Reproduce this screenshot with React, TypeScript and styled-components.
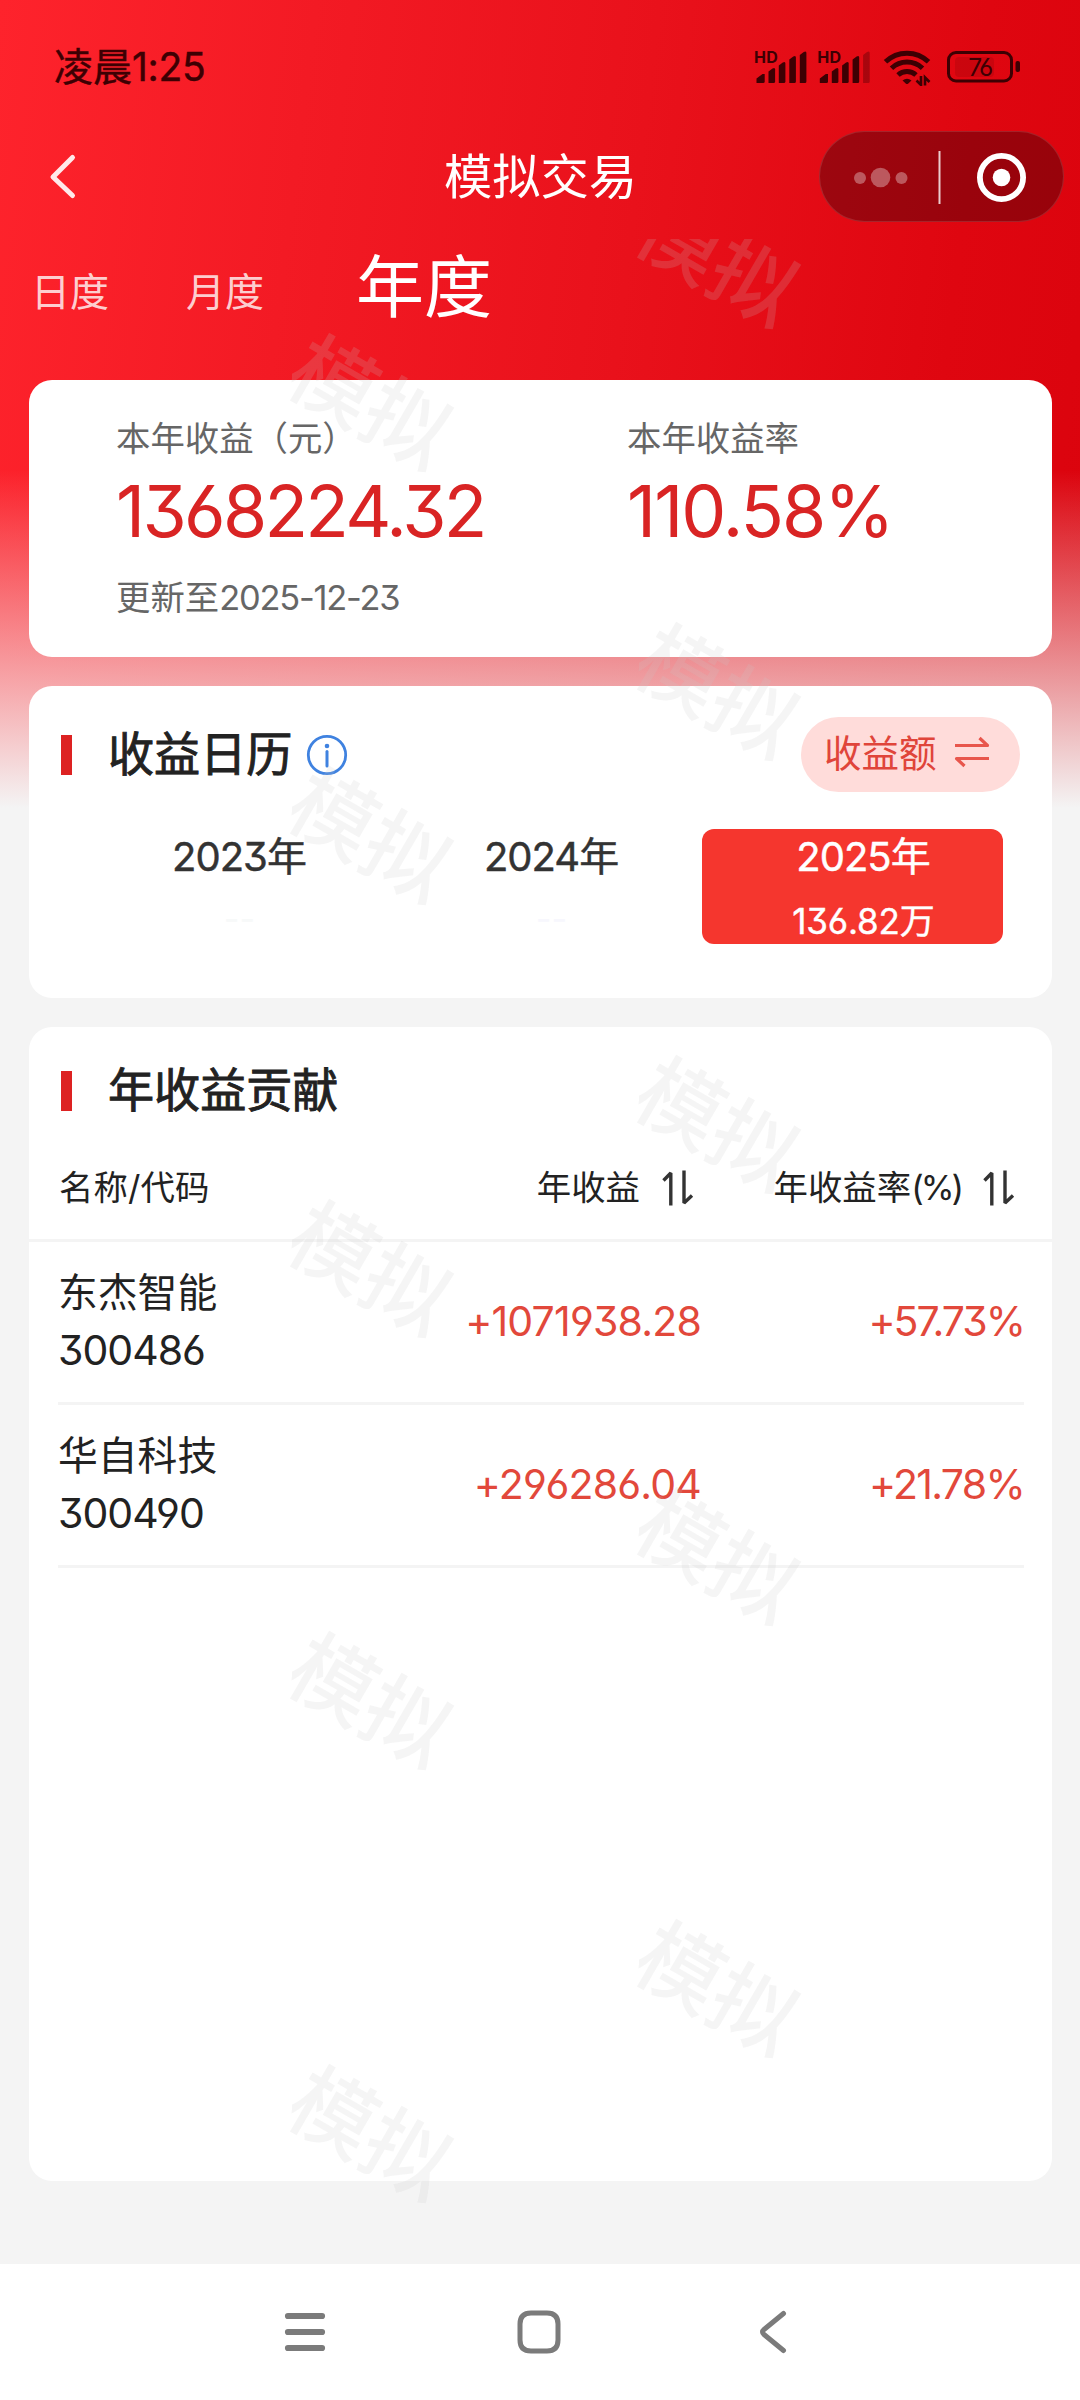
import React from "react";
import styled, { createGlobalStyle } from "styled-components";

const GlobalStyle = createGlobalStyle`
  * { box-sizing: border-box; }
  html, body { margin: 0; padding: 0; }
  body {
    background: #f4f4f4;
    font-family: Inter, "Noto Sans CJK SC", sans-serif;
    font-feature-settings: "cv03", "cv04", "cv09";
    -webkit-font-smoothing: antialiased;
  }
`;

const Screen = styled.div`
  position: relative;
  width: 1080px;
  height: 2400px;
  overflow: hidden;
  display: flex;
  flex-direction: column;
  background:
    linear-gradient(to bottom, rgba(244, 244, 244, 0) 470px, #f4f4f4 808px),
    linear-gradient(97deg, #fe232c 0%, #f31a24 23%, #e9111b 48%, #df0610 72%, #d6000a 100%);
`;

const Text = styled.span<{
  $size: number;
  $color?: string;
  $weight?: number;
  $track?: number;
  $line?: number;
  $stroke?: number;
}>`
  display: block;
  white-space: nowrap;
  font-size: ${(p) => p.$size}px;
  color: ${(p) => p.$color ?? "#222222"};
  font-weight: ${(p) => p.$weight ?? 400};
  letter-spacing: ${(p) => p.$track ?? 0}px;
  line-height: ${(p) => p.$line ?? 50}px;
  -webkit-text-stroke: ${(p) => p.$stroke ?? 0}px currentColor;
`;

const Inline = styled.span<{ $track: number }>`
  letter-spacing: ${(p) => p.$track}px;
`;

const StatusBar = styled.header`
  flex: none;
  height: 131px;
  padding: 42px 60px 39px 54px;
  display: flex;
  justify-content: space-between;
`;

const StatusIcons = styled.svg`
  flex: none;
  width: 270px;
  height: 40px;
  margin-top: 4px;
`;

const TitleBar = styled.div`
  flex: none;
  height: 91px;
  padding: 0 16px 0 47px;
  display: grid;
  grid-template-columns: 246px 1fr 245px;
  align-items: center;
`;

const BackIcon = styled.svg`
  width: 32px;
  height: 50px;
  margin-bottom: 2px;
`;

const Title = styled.h1`
  margin: 0 0 0 -31px;
  text-align: center;
  font-weight: 400;
  font-size: 48.3px;
  line-height: 60px;
  color: #fff;
`;

const Capsule = styled.div`
  width: 245px;
  height: 91px;
  border-radius: 46px;
  background: rgba(20, 0, 5, 0.34);
  border: 1px solid rgba(255, 255, 255, 0.12);
  display: flex;
  align-items: center;
`;

const Tabs = styled.nav`
  flex: none;
  height: 158px;
  padding: 33px 0 0 31px;
  display: flex;
  align-items: flex-start;
`;

const Tab = styled.div<{ $active?: boolean }>`
  width: ${(p) => (p.$active ? 140 : 80)}px;
  margin-right: ${(p) => (p.$active ? 0 : 75)}px;
  padding-top: ${(p) => (p.$active ? 0 : 5)}px;
  &:nth-child(2) { margin-right: 90px; }
  white-space: nowrap;
  font-size: ${(p) => (p.$active ? 68 : 39)}px;
  line-height: 64px;
  color: ${(p) => (p.$active ? "#fff" : "rgba(255,255,255,0.8)")};
`;

const Cards = styled.main`
  flex: none;
  height: 1884px;
  padding: 0 28px 83px 29px;
  display: flex;
  flex-direction: column;
  gap: 29px;
`;

const Card = styled.section<{ $height?: number }>`
  flex: ${(p) => (p.$height ? "none" : "1")};
  height: ${(p) => (p.$height ? `${p.$height}px` : "auto")};
  border-radius: 23px;
  background: #fff;
  overflow: hidden;
`;

const Summary = styled.div`
  display: grid;
  grid-template-columns: 511px 1fr;
  padding: 34px 0 0 87px;
`;

const CardHead = styled.div<{ $top: number }>`
  height: 74px;
  margin-top: ${(p) => p.$top}px;
  padding: 0 32px;
  display: flex;
  align-items: center;
`;

const Marker = styled.i`
  width: 11px;
  height: 40px;
  margin-right: 36px;
  background: #dd2222;
`;

const Heading = styled.h2`
  margin: 0 0 2px;
  font-size: 46.1px;
  line-height: 60px;
  font-weight: 400;
  color: #222;
  -webkit-text-stroke: 0.9px currentColor;
`;

const InfoIcon = styled.svg`
  width: 42px;
  height: 42px;
  margin-left: 14px;
`;

const Pill = styled.button`
  margin: 0 0 1px auto;
  width: 219px;
  height: 75px;
  padding: 0 0 2px 23px;
  border: 0;
  border-radius: 38px;
  background: #ffdcda;
  font-family: inherit;
  display: flex;
  align-items: center;
`;

const SwapIcon = styled.svg`
  width: 38px;
  height: 38px;
  margin: 0 0 5px 16px;
`;

const Years = styled.div`
  display: grid;
  grid-template-columns: repeat(3, 301px);
  column-gap: 11px;
  padding: 37px 0 0 49px;
`;

const Year = styled.div<{ $active?: boolean }>`
  height: 115px;
  padding: 3px 0 0 22px;
  border-radius: 12px;
  text-align: center;
  background: ${(p) => (p.$active ? "#f5362e" : "transparent")};
`;

const TableHead = styled.div`
  height: 114px;
  padding: 26px 36px 0 30px;
  border-bottom: 3px solid #f4f4f4;
  display: grid;
  grid-template-columns: 240px 396px 1fr;
  align-items: start;
`;

const HeadCell = styled.div`
  display: flex;
  justify-content: flex-end;
  align-items: center;
`;

const SortIcon = styled.svg`
  width: 32px;
  height: 38px;
  margin-left: 22px;
  margin-right: 1px;
`;

const Row = styled.div`
  height: 163px;
  margin: 0 28px 0 29px;
  border-bottom: 3px solid #f4f4f4;
  display: grid;
  grid-template-columns: 240px 403px 1fr;
  align-items: center;
`;

const Stock = styled.div`
  padding-bottom: 2px;
`;

const Value = styled.div`
  padding-bottom: 2px;
  text-align: right;
`;

const NavBar = styled.footer`
  flex: none;
  height: 136px;
  background: #fff;
  display: flex;
  justify-content: center;
  gap: 186px;
  padding: 44px 3px 0 0;
`;

const NavIcon = styled.svg`
  width: 48px;
  height: 48px;
`;

const Watermarks = styled.div`
  position: absolute;
  left: 0;
  right: 0;
  top: 239px;
  bottom: 136px;
  overflow: hidden;
  pointer-events: none;
`;

const Mark = styled.span<{ $x: number; $y: number }>`
  position: absolute;
  left: ${(p) => p.$x}px;
  top: ${(p) => p.$y - 239}px;
  transform: translate(-50%, -50%) rotate(30deg);
  font-size: 84.5px;
  font-weight: 500;
  line-height: 1;
  white-space: nowrap;
  color: rgba(200, 200, 200, 0.18);
`;

const INK = "#3d0003";

function Signal({ x, weak }: { x: number; weak?: boolean }) {
  return (
    <g transform={`translate(${x} 0)`} fill={INK}>
      <text x="-2.5" y="16.5" fontSize="16" fontWeight="700" letterSpacing="0.2">HD</text>
      <path d="M0 37v-4.500l6-4.500h2.200v7.500a1.500 1.500 0 0 1-1.500 1.500H1.500Z" />
      <path d="M12 37V25.500l4-3q2.600-1.500 2.600 1V35.500a1.500 1.500 0 0 1-1.500 1.500Z" />
      <path d="M22.300 37V19.500l4-3q2.600-1.500 2.600 1V35.500a1.500 1.500 0 0 1-1.500 1.500Z" />
      <path d="M32.800 37V13.500l4-3q2.600-1.500 2.600 1V35.500a1.500 1.500 0 0 1-1.500 1.500Z" />
      <path d="M43.300 37V9l4-3q2.600-1.500 2.600 1V35.500a1.500 1.500 0 0 1-1.500 1.500Z" opacity={weak ? 0.35 : 1} />
    </g>
  );
}

function Sort() {
  return (
    <SortIcon viewBox="0 0 32 38" fill="none" stroke="#333" strokeWidth="3.4">
      <path d="M1.500 11.500 8.800 4V36.500" strokeLinejoin="bevel" />
      <path d="M22 1.500V34L30 26.500" strokeLinejoin="bevel" />
    </SortIcon>
  );
}

const rows = [
  { name: "东杰智能", code: "300486", gain: "+1071938.28", gainTrack: -0.8, rate: "+57.73%", rateTrack: -2 },
  { name: "华自科技", code: "300490", gain: "+296286.04", gainTrack: -0.8, rate: "+21.78%", rateTrack: -1.7 },
];

const marks: Array<[number, number]> = [
  [717, 260], [370, 403], [717, 692], [370, 836], [717, 1125],
  [370, 1269], [717, 1557], [370, 1701], [717, 1989], [370, 2134],
];

export default function App() {
  return (
    <Screen lang="zh-CN">
      <GlobalStyle />
      <StatusBar>
        <Text $size={39} $color={INK} $stroke={0.45}>
          凌晨<Inline $track={-0.3}>1:25</Inline>
        </Text>
        <StatusIcons viewBox="0 0 270 40">
          <Signal x={6.5} />
          <Signal x={69.800} weak />
          <g fill="none" stroke={INK} strokeWidth="5">
            <path d="M135.500 15.800a31 31 0 0 1 43 0" />
            <path d="M141.500 22.300a22.500 22.500 0 0 1 31 0" />
            <path d="M148 29a13.500 13.500 0 0 1 18 0" />
          </g>
          <path d="M152.500 34.500q4.500-3.600 9 0l-3.500 3.200q-1 .8-2 0Z" fill={INK} />
          <g fill="none" stroke={INK} strokeWidth="2.600">
            <path d="M171 30v9l-4.500-4.500" />
            <path d="M175 39.500V31.500l4.500 4.500" />
          </g>
          <rect x="205" y="11" width="39" height="20" rx="4" fill={INK} opacity="0.12" />
          <rect x="198.500" y="6.500" width="63" height="28.500" rx="7.500" fill="none" stroke={INK} strokeWidth="3" />
          <rect x="265.500" y="15" width="4.500" height="11" rx="2" fill={INK} />
          <text x="230" y="29.500" fontSize="24.5" textAnchor="middle" letterSpacing="-1.5" fill={INK}>76</text>
        </StatusIcons>
      </StatusBar>

      <TitleBar>
        <BackIcon viewBox="0 0 32 50" fill="none">
          <path d="M25.500 6.500 6 26 25.500 44.500" stroke="#ffe9ea" strokeWidth="5" strokeLinecap="round" strokeLinejoin="round" />
        </BackIcon>
        <Title>模拟交易</Title>
        <Capsule>
          <svg width="243" height="89" viewBox="0 0 243 89">
            <g fill="#fff" opacity="0.33">
              <circle cx="40" cy="46" r="6" />
              <circle cx="60.500" cy="45.500" r="9.800" />
              <circle cx="81.500" cy="46" r="6" />
            </g>
            <rect x="118.500" y="19" width="2" height="53" fill="#fff" opacity="0.8" />
            <circle cx="181.500" cy="45.500" r="21.600" fill="none" stroke="#fff" strokeWidth="5.800" />
            <circle cx="181.500" cy="45.500" r="8.800" fill="#fff" />
          </svg>
        </Capsule>
      </TitleBar>

      <Tabs>
        <Tab>日度</Tab>
        <Tab>月度</Tab>
        <Tab $active>年度</Tab>
      </Tabs>

      <Cards>
        <Card $height={277}>
          <Summary>
            <div>
              <Text $size={34.4} $color="#666">本年收益（元）</Text>
              <Text $size={71.5} $color="#d92424" $track={-2.7} $line={95}>1368224.32</Text>
              <Text $size={34.4} $color="#666" $line={78}>
                更新至<Inline $track={-1.2}>2025-12-23</Inline>
              </Text>
            </div>
            <div>
              <Text $size={34.4} $color="#666">本年收益率</Text>
              <Text $size={71.5} $color="#d92424" $track={-1.9} $line={95}>110.58%</Text>
            </div>
          </Summary>
        </Card>

        <Card $height={312}>
          <CardHead $top={32}>
            <Marker />
            <Heading>收益日历</Heading>
            <InfoIcon viewBox="0 0 42 42">
              <circle cx="21" cy="21" r="18.700" fill="none" stroke="#3f82e0" strokeWidth="2.800" />
              <circle cx="21" cy="12" r="2.300" fill="#3f82e0" />
              <path d="M21 17.500V32" stroke="#3f82e0" strokeWidth="3" strokeLinecap="round" />
            </InfoIcon>
            <Pill>
              <Text $size={37.5} $color="#e0453a">收益额</Text>
              <SwapIcon viewBox="0 0 38 38" fill="none" stroke="#e8564c" strokeWidth="3.200" strokeLinejoin="round">
                <path d="M2 13.500H34.500L26.500 6" />
                <path d="M36 26.500H3.500L11.500 34" />
              </SwapIcon>
            </Pill>
          </CardHead>
          <Years>
            <Year>
              <Text $size={40} $color="#333" $stroke={0.45}><Inline $track={-1}>2023</Inline>年</Text>
              <Text $size={34} $color="#f7f9f9" $line={74}>--</Text>
            </Year>
            <Year>
              <Text $size={40} $color="#333" $stroke={0.45}><Inline $track={-1}>2024</Inline>年</Text>
              <Text $size={34} $color="#f7f7fd" $line={74}>--</Text>
            </Year>
            <Year $active>
              <Text $size={40} $color="#fff" $stroke={0.45}><Inline $track={-1}>2025</Inline>年</Text>
              <Text $size={35} $color="#fff" $line={78} $stroke={0.4}><Inline $track={-0.2}>136.82</Inline>万</Text>
            </Year>
          </Years>
        </Card>

        <Card>
          <CardHead $top={27}>
            <Marker />
            <Heading>年收益贡献</Heading>
          </CardHead>
          <TableHead>
            <Text $size={34.4} $line={68} $track={0.1}>名称/代码</Text>
            <HeadCell>
              <Text $size={34.4} $line={68}>年收益</Text>
              <Sort />
            </HeadCell>
            <HeadCell>
              <Text $size={34.4} $line={68}>年收益率<Inline $track={-3}>(%)</Inline></Text>
              <Sort />
            </HeadCell>
          </TableHead>
          {rows.map((r) => (
            <Row key={r.code}>
              <Stock>
                <Text $size={39.8} $line={58}>{r.name}</Text>
                <Text $size={41} $line={56} $track={-1}>{r.code}</Text>
              </Stock>
              <Value><Text $size={41} $color="#e2483b" $track={r.gainTrack}>{r.gain}</Text></Value>
              <Value><Text $size={41} $color="#e2483b" $track={r.rateTrack}>{r.rate}</Text></Value>
            </Row>
          ))}
        </Card>
      </Cards>

      <NavBar>
        <NavIcon viewBox="0 0 48 48" stroke="#7b7b7b" strokeWidth="6.200" strokeLinecap="round">
          <path d="M7 8H41M7 24H41M7 40H41" />
        </NavIcon>
        <NavIcon viewBox="0 0 48 48" fill="none" stroke="#7b7b7b" strokeWidth="5">
          <path d="M16 5H32Q43 5 43 16V32Q43 43 32 43H16Q5 43 5 32V16Q5 5 16 5Z" />
        </NavIcon>
        <NavIcon viewBox="0 0 48 48" fill="none" stroke="#7b7b7b" strokeWidth="5" strokeLinecap="round">
          <path d="M34.500 5.500 15 21.500Q12 24 15 26.500L34.500 42.500" />
        </NavIcon>
      </NavBar>

      <Watermarks>
        {marks.map(([x, y]) => (
          <Mark key={`${x}-${y}`} $x={x} $y={y}>模拟</Mark>
        ))}
      </Watermarks>
    </Screen>
  );
}
